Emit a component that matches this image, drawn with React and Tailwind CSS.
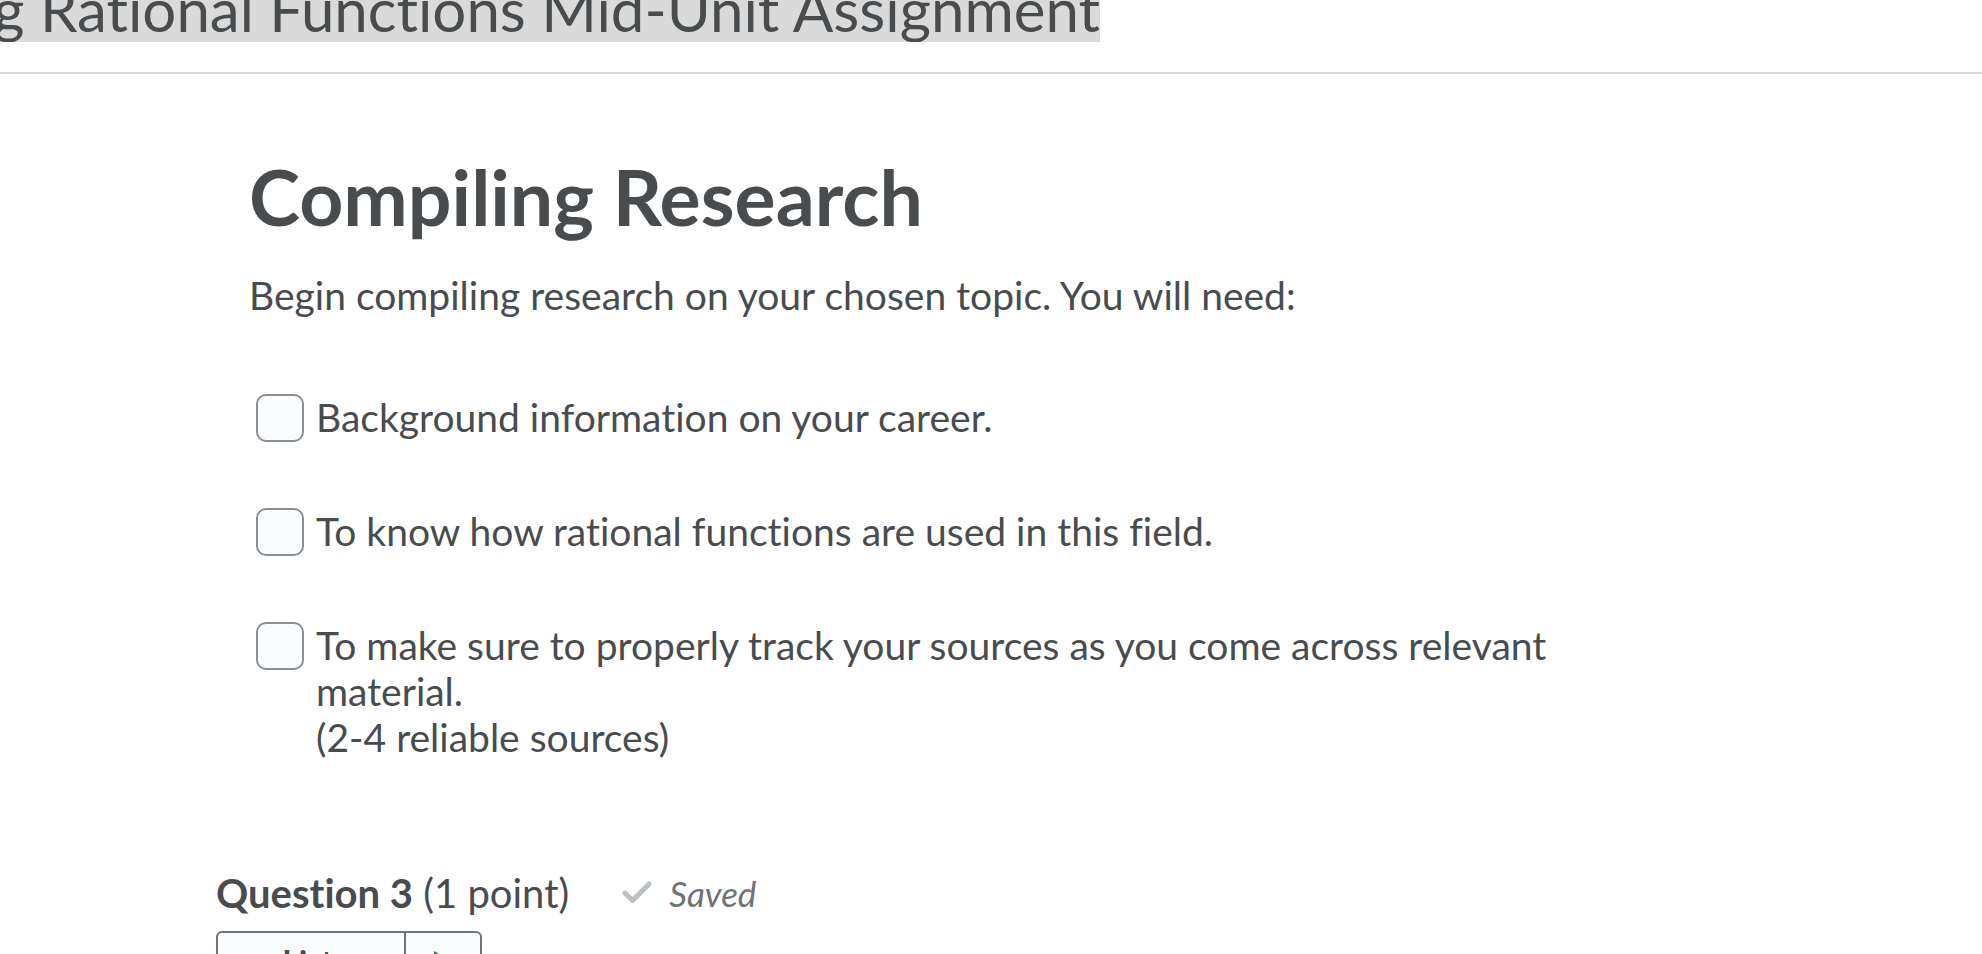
import { Check, Volume1 } from 'lucide-react';

const ITEMS = [
  'Background information on your career.',
  'To know how rational functions are used in this field.',
  ['To make sure to properly track your sources as you come across relevant material.', '(2-4 reliable sources)'],
];

function Checkbox() {
  return <span className="shrink-0 w-12 h-12 rounded-[10px] border-2 border-[#8a8f93] bg-[#f9fbff]" />;
}

export default function App() {
  return (
    <div className="min-h-screen bg-white text-[#494c4e] font-['Lato','Noto_Sans',sans-serif] [font-variant-ligatures:none] overflow-hidden">
      {/* Header */}
      <div className="h-[74px] border-b-2 border-[#d3d9de]">
        <div className="w-[1100px] h-[42px] overflow-hidden flex items-end justify-end">
          <h1 className="whitespace-nowrap bg-[#dadada] text-[60px] leading-[1.2] font-normal translate-y-[3px]">
            Investigating Rational Functions Mid-Unit Assignment
          </h1>
        </div>
      </div>

      <div className="pl-[216px]">
        <div className="pl-[33px]">
          <h2 className="mt-[84px] text-[77px] leading-none font-bold">Compiling Research</h2>
          <p className="mt-[37px] text-[39px] leading-[46px]">
            Begin compiling research on your chosen topic. You will need:
          </p>

          <div className="mt-[76px] flex flex-col gap-[66px]">
            {ITEMS.map((item, i) => (
              <label key={i} className="flex items-start gap-[12px] pl-[7px]">
                <Checkbox />
                <div className="max-w-[1300px] text-[39px] leading-[46px]">
                  {Array.isArray(item) ? (
                    <>
                      <span>{item[0]}</span>
                      <br />
                      <span>{item[1]}</span>
                    </>
                  ) : (
                    item
                  )}
                </div>
              </label>
            ))}
          </div>
        </div>

        {/* Question 3 */}
        <div className="mt-[110px] flex items-center h-[46px]">
          <span className="text-[40px] leading-[46px]">
            <span className="font-bold">Question 3</span> (1 point)
          </span>
          <Check size={36} strokeWidth={3.5} className="ml-[50px] text-[#bcc1c5]" />
          <span className="ml-[14px] text-[35px] italic text-[#6e7376]">Saved</span>
        </div>

        <div className="mt-[15px] flex w-[266px] h-[62px] rounded-md border-2 border-[#6e7376] bg-[#f9fbff]">
          <div className="flex items-center gap-3 px-[36px] w-[188px] border-r-2 border-[#6e7376]">
            <Volume1 size={34} strokeWidth={2.5} className="text-[#494c4e]" fill="#494c4e" />
            <span className="text-[32px] font-bold">Listen</span>
          </div>
          <div className="flex-1 flex items-center justify-center">
            <svg width="22" height="26" viewBox="0 0 22 26">
              <path d="M2 2 L20 13 L2 24 Z" fill="#2e7d32" />
            </svg>
          </div>
        </div>
      </div>
    </div>
  );
}
